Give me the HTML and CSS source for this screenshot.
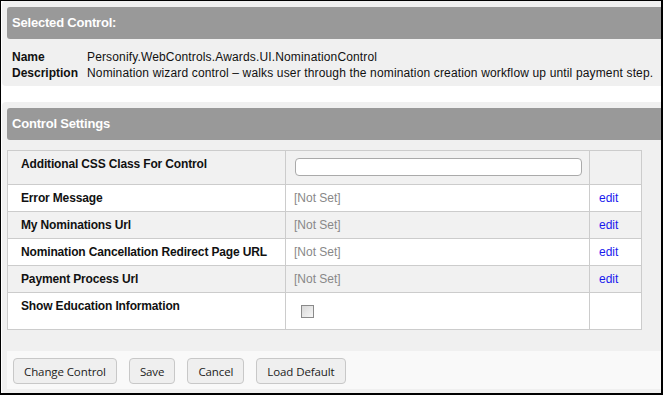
FILE: index.html
```html
<!DOCTYPE html>
<html lang="en">
<head>
    <meta charset="UTF-8">
    <title>Control Settings</title>
    <link rel="stylesheet" href="styles.css">
</head>
<body>
    <div class="frame">
        <!-- Selected control -->
        <div class="panel">
            <div class="panel-header">Selected Control:</div>
            <div class="info">
                <div class="info-label">Name</div>
                <div>Personify.WebControls.Awards.UI.NominationControl</div>
                <div class="info-label">Description</div>
                <div>Nomination wizard control &ndash; walks user through the nomination creation workflow up until payment step.</div>
            </div>
        </div>

        <!-- Settings -->
        <div class="panel settings">
            <div class="panel-header">Control Settings</div>
            <table class="grid">
                <tr class="alt">
                    <td class="label">Additional CSS Class For Control</td>
                    <td><input type="text" class="text-input"></td>
                    <td></td>
                </tr>
                <tr>
                    <td class="label">Error Message</td>
                    <td class="not-set">[Not Set]</td>
                    <td><a href="#" class="edit">edit</a></td>
                </tr>
                <tr class="alt">
                    <td class="label">My Nominations Url</td>
                    <td class="not-set">[Not Set]</td>
                    <td><a href="#" class="edit">edit</a></td>
                </tr>
                <tr>
                    <td class="label">Nomination Cancellation Redirect Page URL</td>
                    <td class="not-set">[Not Set]</td>
                    <td><a href="#" class="edit">edit</a></td>
                </tr>
                <tr class="alt">
                    <td class="label">Payment Process Url</td>
                    <td class="not-set">[Not Set]</td>
                    <td><a href="#" class="edit">edit</a></td>
                </tr>
                <tr>
                    <td class="label">Show Education Information</td>
                    <td><input type="checkbox" class="check"></td>
                    <td></td>
                </tr>
            </table>

            <div class="button-bar">
                <button class="btn">Change Control</button>
                <button class="btn">Save</button>
                <button class="btn">Cancel</button>
                <button class="btn">Load Default</button>
            </div>
        </div>
    </div>
</body>
</html>
```

FILE: styles.css
```css
html, body {
    margin: 0;
    padding: 0;
    background: #fff;
}

body {
    font-family: 'Liberation Sans', Arial, sans-serif;
    font-size: 12px;
    color: #111;
    overflow: hidden;
}

.frame {
    box-sizing: border-box;
    width: 663px;
    height: 395px;
    border-style: solid;
    border-color: #000;
    border-width: 1px 2px 2px 1px;
    overflow: hidden;
}

.panel {
    background: #f0f0f0;
    margin-left: 1px;
    padding: 6px 0 0 5px;
    border-radius: 4px 0 0 4px;
}

.panel-header {
    background: #999;
    color: #fff;
    font-weight: bold;
    font-size: 13px;
    letter-spacing: -0.2px;
    height: 32px;
    line-height: 32px;
    padding-left: 5px;
    border-radius: 3px 0 0 3px;
}

.info {
    display: grid;
    grid-template-columns: 75px 1fr;
    line-height: 16px;
    padding: 10px 0 5px 5px;
    white-space: nowrap;
    letter-spacing: 0.15px;
}

.info-label {
    font-weight: bold;
    letter-spacing: 0;
}

.settings {
    margin-top: 16px;
    padding-bottom: 5px;
}

.grid {
    border-collapse: collapse;
    width: 635px;
    margin-top: 10px;
    table-layout: fixed;
}

.grid td {
    border: 1px solid #ccc;
    padding: 6px 8px 6px 8px;
    vertical-align: top;
    line-height: 14px;
    background: #fff;
}

.grid tr.alt td {
    background: #f1f1f1;
}

.grid td:nth-child(1) {
    width: 256px;
    padding-left: 13px;
}

.grid td:nth-child(3) {
    width: 34px;
    padding-left: 9px;
}

.label {
    font-weight: bold;
    letter-spacing: -0.15px;
}

.not-set {
    color: #888;
}

.edit {
    color: #1a1aee;
    text-decoration: none;
}

.text-input {
    box-sizing: border-box;
    width: 287px;
    height: 18px;
    margin: 1px 0 2px 1px;
    border: 1px solid #aaa;
    border-radius: 4px;
    background: #fff;
    display: block;
}

.check {
    appearance: none;
    box-sizing: border-box;
    width: 13px;
    height: 13px;
    margin: 6px 0 5px 7px;
    border: 1px solid #8a8a8a;
    background: linear-gradient(135deg, #d8d8d8, #f6f6f6);
    display: block;
}

.button-bar {
    background: #f9f9f9;
    margin-top: 21px;
    padding: 7px 0 5px 6px;
    display: flex;
    gap: 12px;
}

.btn {
    font-family: 'Open Sans', 'Noto Sans', sans-serif;
    font-size: 11.5px;
    letter-spacing: -0.1px;
    color: #222;
    background: #efefef;
    border: 1px solid #c8c8c8;
    border-radius: 4px;
    height: 26px;
    padding: 0 10px;
}
```
